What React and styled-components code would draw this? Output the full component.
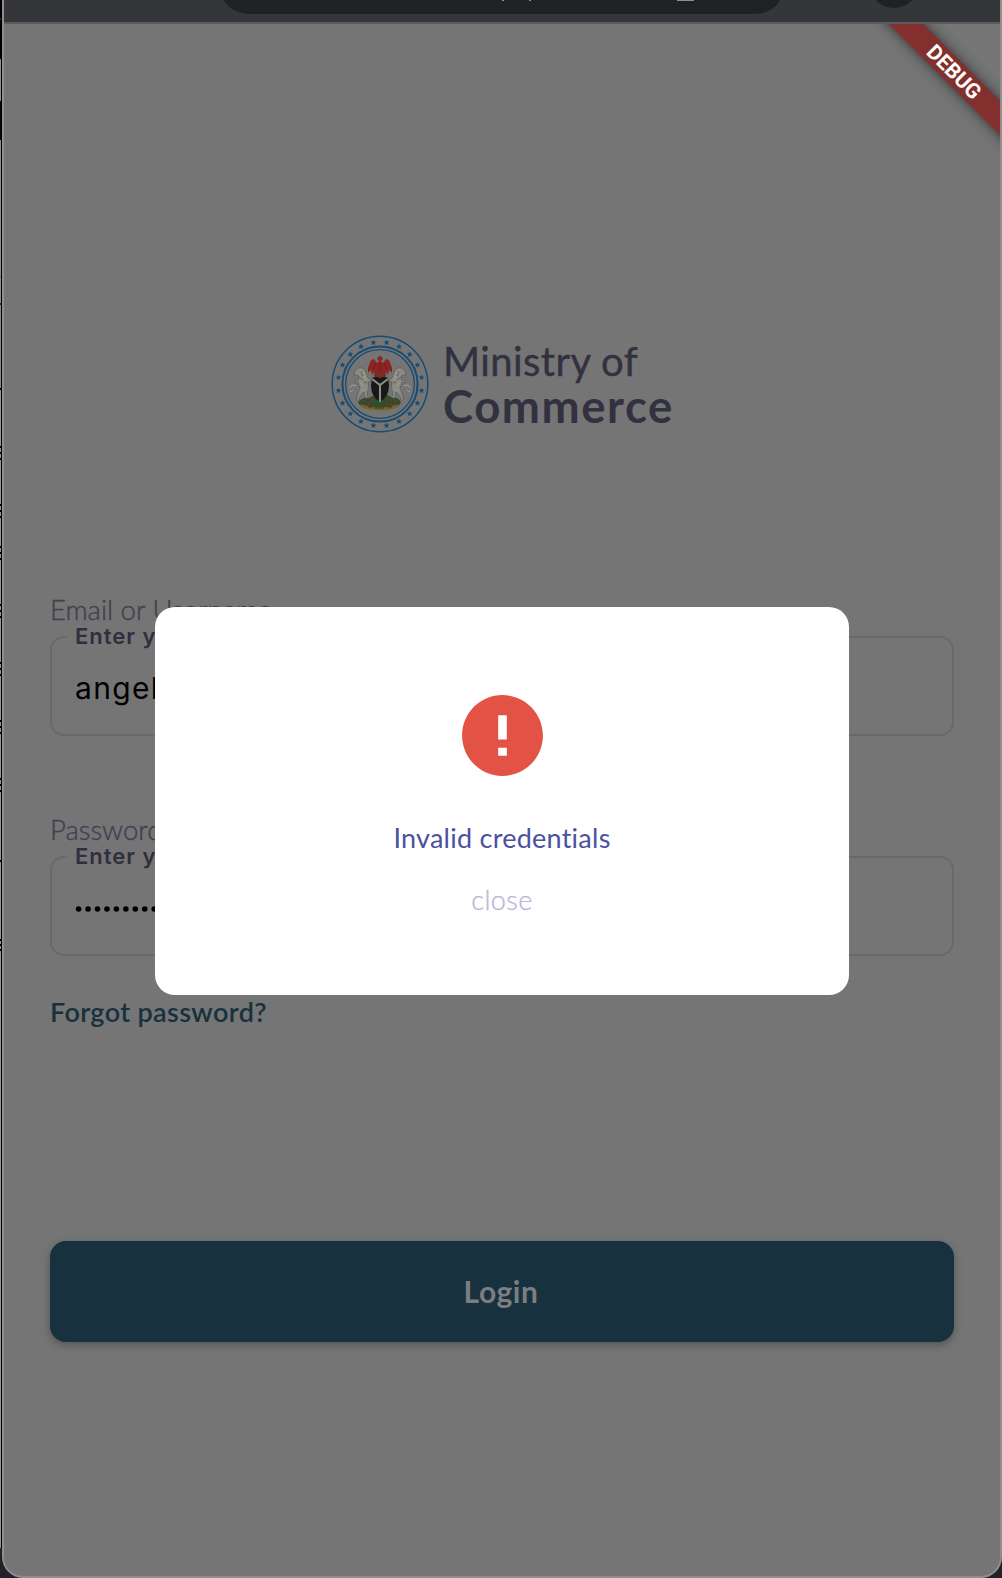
import React from "react";
import styled, { createGlobalStyle } from "styled-components";

const GlobalStyle = createGlobalStyle`
  * { box-sizing: border-box; }
  body { margin: 0; background: #1f1f25; font-family: Lato, "Open Sans", sans-serif; }
`;

const Screen = styled.div`
  width: 1002px;
  height: 1578px;
  display: flex;
  overflow: hidden;
  background: #222228;
`;

const Edge = styled.div`
  width: 2px;
  height: 1548px;
  flex: none;
  border-right: 1px solid #000;
  background: linear-gradient(#000 0 18px, #333 18px 20px, #000 20px 59px, #8e8e8e 59px 101px, #05070d 101px 140px, #8e8e8e 140px 276px, #71777c 276px 278px, #8e8e8e 278px 303px, #20262c 303px 305px, #858b90 305px 388px, #000 388px 390px, #969696 390px);
`;

const EdgeMarks = styled.svg`
  display: block;
`;

const Window = styled.div`
  position: relative;
  flex: 1;
  height: 1578px;
  display: flex;
  flex-direction: column;
  overflow: hidden;
  background: #757575;
  border: 2px solid #8e8e8e;
  border-top: 0;
  border-radius: 0 0 21px 21px;
`;

const BrowserBar = styled.header`
  height: 24px;
  flex: none;
  display: flex;
  align-items: flex-start;
  margin: 0 -1px;
  padding-left: 217px;
  background: #35363a;
  border-bottom: 2px solid #5b5c61;
  overflow: hidden;
`;

const AddressBar = styled.div`
  width: 564px;
  height: 56px;
  flex: none;
  margin-top: -42px;
  border-radius: 28px;
  background: #202124;
`;

const BarGlyphs = styled.svg`
  display: block;
  margin: 42px 0 0 281px;
`;

const Profile = styled.div`
  width: 50px;
  height: 50px;
  flex: none;
  margin: -42px 0 0 85px;
  border-radius: 50%;
  background: #202124;
`;

const RibbonCorner = styled.div`
  position: absolute;
  top: 24px;
  right: 0;
  width: 160px;
  height: 160px;
  overflow: hidden;
`;

const Ribbon = styled.div`
  position: absolute;
  left: 14px;
  top: 36px;
  width: 200px;
  height: 24px;
  transform: rotate(45deg);
  background: #822f2d;
  box-shadow: 0 0 13px rgba(0, 0, 0, 0.6);
  color: #fff;
  font: 700 21px/24px Roboto, sans-serif;
  text-align: center;
`;

const Page = styled.main`
  flex: 1;
  display: flex;
  flex-direction: column;
  padding: 307px 46px 0;
`;

const Brand = styled.div`
  display: flex;
  gap: 14px;
  height: 104px;
  margin-left: 281px;
`;

const Seal = styled.svg`
  display: block;
  margin-top: 4px;
`;

const BrandName = styled.div`
  display: flex;
  flex-direction: column;
  padding-top: 7px;
  color: #31313f;
  white-space: nowrap;
`;

const BrandTop = styled.span`
  font-size: 40px;
  line-height: 46px;
  letter-spacing: 0.4px;
  -webkit-text-stroke: 0.4px #31313f;
`;

const BrandBottom = styled.span`
  font-size: 45.5px;
  font-weight: 700;
  line-height: 44px;
  letter-spacing: 1.55px;
`;

const Field = styled.div`
  display: flex;
  flex-direction: column;
  margin-top: ${(p) => p.$top}px;
`;

const Label = styled.label`
  height: 44px;
  color: #41414f;
  font-size: 27.5px;
  font-weight: 300;
  line-height: 33px;
  -webkit-text-stroke: 0.4px #41414f;
`;

const Box = styled.fieldset`
  height: 110px;
  min-width: 0;
  margin: -11px 0 0;
  padding: 0 0 0 23px;
  border: 2px solid #69686f;
  border-radius: 14px;
`;

const Legend = styled.legend`
  width: 300px;
  margin-left: -8px;
  padding: 0 8px;
  height: 22px;
  color: #2f2f3e;
  font: 600 22px/21px Inter, sans-serif;
  letter-spacing: 1px;
  white-space: nowrap;
`;

const Value = styled.div`
  padding-top: 20px;
  height: 64px;
  color: #000;
  font: 400 30px/40px Inter, sans-serif;
  letter-spacing: 1.35px;
`;

const Dots = styled.svg`
  display: block;
  margin-top: 38px;
`;

const Forgot = styled.a`
  height: 36px;
  margin-top: 38px;
  color: #17313f;
  font-size: 27px;
  font-weight: 600;
  line-height: 36px;
  letter-spacing: 0.37px;
`;

const Login = styled.button`
  height: 101px;
  margin-top: 211px;
  padding: 0 2px 2px 0;
  border: 0;
  border-radius: 16px;
  background: #17313f;
  box-shadow: 0 3px 9px rgba(0, 0, 0, 0.28);
  color: #7a7e80;
  font: 700 30px/40px Lato, sans-serif;
  letter-spacing: 0.5px;
`;

const Dialog = styled.section`
  position: absolute;
  left: 151px;
  top: 607px;
  width: 694px;
  height: 388px;
  display: flex;
  flex-direction: column;
  align-items: center;
  padding-top: 80px;
  border-radius: 20px;
  background: #fff;
`;

const Message = styled.p`
  margin: 36px 0 0;
  height: 36px;
  color: #4a52a0;
  font-size: 27px;
  line-height: 36px;
  letter-spacing: 0.25px;
`;

const Close = styled.button`
  margin: 26px 0 0;
  padding: 0;
  height: 36px;
  border: 0;
  background: none;
  color: #b9b8da;
  font: 300 27px/36px Lato, sans-serif;
  letter-spacing: 0.4px;
  -webkit-text-stroke: 0.35px #b9b8da;
`;

const STAR = "M0-3L.8-1 3-.9 1.3.5 1.9 2.6 0 1.4-1.9 2.6-1.3.5-3-.9-.8-1Z";

function Supporter() {
  return (
    <>
      <path d="M24 36l3-3 5 0 3 4 2 6 4 2-4 2 1 7-2 3 1 6h-3l-1-6-4 4-1 4h-3l2-7 2-5-2-6-4 1 1-2 4-2-1-4-4 0z" fill="#8b8b83" stroke="#55554f" strokeWidth=".6" />
      <path d="M29 34l4 5 1 5M29 47l3 4m2 2l-3 3M25 51l-4-1-3 3m4 2l-3 2" fill="none" stroke="#a2a097" strokeWidth="1" />
      <path d="M30 36l2 5m-4 1l4 3m1 2l3 1" stroke="#4c4c49" strokeWidth=".7" />
    </>
  );
}

function Emblem() {
  const stars = Array.from({ length: 20 }, (_, i) => {
    const a = ((i * 18 + 9) * Math.PI) / 180;
    return [49 + 42 * Math.sin(a), 49 - 42 * Math.cos(a)];
  });
  return (
    <Seal width="98" height="98" viewBox="0 0 98 98">
      <g fill="none" stroke="#174b72">
        <circle cx="49" cy="49" r="47.8" strokeWidth="1.5" />
        <circle cx="49" cy="49" r="37.6" strokeWidth="2" />
        <circle cx="49" cy="49" r="34.4" strokeWidth="1.3" />
      </g>
      {stars.map(([x, y], i) => (
        <path key={i} d={STAR} fill="#174b72" transform={`translate(${x} ${y})`} />
      ))}
      <path d="M27 67q5-5 11-4 5-4 11-2 6-3 11 1 7 0 10 5-2 6-11 7-10 2-20 0-10-1-12-7z" fill="#304e2c" />
      <path d="M29 69q20 7 39 0l-3 4q-16 5-33 0z" fill="#7b622b" />
      <path d="M37 72h4m3 1h9m4-1h4" stroke="#41351c" strokeWidth="1" />
      <g fill="#8b2929">
        <circle cx="33" cy="66" r="1.3" /><circle cx="38" cy="69" r="1.2" /><circle cx="41" cy="64" r="1.2" />
        <circle cx="56" cy="65" r="1.3" /><circle cx="60" cy="69" r="1.2" /><circle cx="65" cy="66" r="1.3" />
      </g>
      <Supporter />
      <g transform="translate(98 0) scale(-1 1)">
        <Supporter />
      </g>
      <path d="M41 43q8-4 16 0l1 7q0 12-9 17-9-5-9-17z" fill="#181817" />
      <path d="M41 44l8 6 8-6M49 50v17" fill="none" stroke="#8d8d88" strokeWidth="2.1" />
      <path d="M43 41q6-3 12 0" fill="none" stroke="#31533a" strokeWidth="2" />
      <path d="M47 22q2-2 4 0l1 2-2 2 2 2 3-4 3 1 3 8 0 5-3-3-1 5-2-3-1 4-3-2 1 3-3 1-3-1 1-3-3 2-1-4-2 3-1-5-3 3 0-5 3-8 3-1 3 4 2-2-2-2z" fill="#8c2424" />
      <path d="M45 29l-3 6m11-6l3 6m-7-7v8" stroke="#5b2020" strokeWidth=".8" />
    </Seal>
  );
}

const MARKS = [446, 452, 458, 504, 510, 516, 546, 552, 558, 604, 610, 616, 662, 668, 674, 720, 726, 732, 778, 784, 790, 860, 939, 944, 949];

export default function App() {
  return (
    <>
      <GlobalStyle />
      <Screen>
        <Edge>
          <EdgeMarks width="1" height="1548">
            {MARKS.map((y) => (
              <rect key={y} y={y} width="1" height="2" fill="#000" />
            ))}
          </EdgeMarks>
        </Edge>
        <Window>
          <BrowserBar>
            <AddressBar>
              <BarGlyphs width="196" height="2">
                <path d="M1 0h2v1H1zM28 0h2v1h-2zM176 0h17v1h-17z" fill="#8b8e91" />
              </BarGlyphs>
            </AddressBar>
            <Profile />
          </BrowserBar>
          <RibbonCorner>
            <Ribbon>DEBUG</Ribbon>
          </RibbonCorner>
          <Page>
            <Brand>
              <Emblem />
              <BrandName>
                <BrandTop>Ministry of</BrandTop>
                <BrandBottom>Commerce</BrandBottom>
              </BrandName>
            </Brand>
            <Field $top={158}>
              <Label>Email or Username</Label>
              <Box>
                <Legend>Enter your email</Legend>
                <Value>angel</Value>
              </Box>
            </Field>
            <Field $top={77}>
              <Label>Password</Label>
              <Box>
                <Legend>Enter your password</Legend>
                <Dots width="110" height="6">
                  {Array.from({ length: 11 }, (_, i) => (
                    <circle key={i} cx={3.6 + i * 9.45} cy="3" r="2.8" />
                  ))}
                </Dots>
              </Box>
            </Field>
            <Forgot>Forgot password?</Forgot>
            <Login>Login</Login>
          </Page>
          <Dialog role="alertdialog">
            <svg width="97" height="97" viewBox="0 0 24 24" fill="#e35345">
              <path d="M12 2C6.48 2 2 6.48 2 12s4.48 10 10 10 10-4.48 10-10S17.52 2 12 2zm1.07 15h-2.14v-2h2.14v2zm0-4h-2.14V7h2.14v6z" />
            </svg>
            <Message>Invalid credentials</Message>
            <Close>close</Close>
          </Dialog>
        </Window>
      </Screen>
    </>
  );
}
